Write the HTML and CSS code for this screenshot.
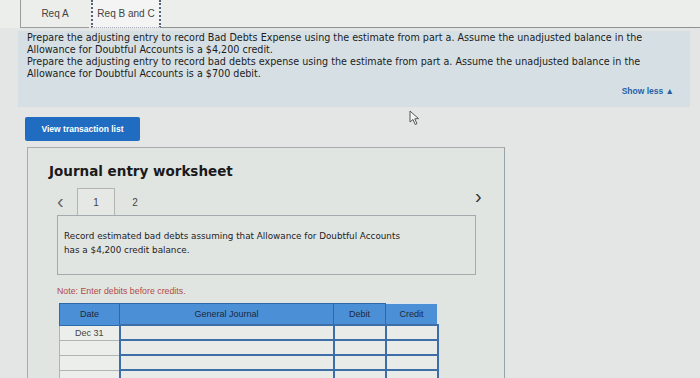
FILE: index.html
```html
<!DOCTYPE html>
<html>
<head>
<meta charset="utf-8"/>
<title>Req B and C</title>
<link rel="stylesheet" href="styles.css">
</head>
<body>
    <div id="tabs">
        <div class="tab">Req A</div>
        <div class="tab active">Req B and C</div>
        <div class="tab-rest"></div>
    </div>

    <div id="instructions">
        <p>Prepare the adjusting entry to record Bad Debts Expense using the estimate from part a. Assume the unadjusted balance in the Allowance for Doubtful Accounts is a $4,200 credit.</p>
        <p>Prepare the adjusting entry to record bad debts expense using the estimate from part a. Assume the unadjusted balance in the Allowance for Doubtful Accounts is a $700 debit.</p>
        <div class="show-less">Show less &#9650;</div>
    </div>

    <div id="actions">
        <button class="view-btn">View transaction list</button>
        <svg class="cursor" width="12" height="16" viewBox="0 0 12 16">
            <path d="M1 1 L1 12 L4 9.5 L6.2 14.5 L8 13.7 L5.8 8.8 L9.5 8.6 Z" fill="#f4f4f4" stroke="#555" stroke-width="1"/>
        </svg>
    </div>

    <div id="worksheet">
        <h2>Journal entry worksheet</h2>
        <div class="pager">
            <span class="arrow">&lsaquo;</span>
            <span class="page current">1</span>
            <span class="page">2</span>
            <span class="arrow next">&rsaquo;</span>
        </div>
        <div class="desc">Record estimated bad debts assuming that Allowance for Doubtful Accounts has a $4,200 credit balance.</div>
        <p class="note">Note: Enter debits before credits.</p>
        <table class="journal">
            <tr>
                <th class="c-date">Date</th>
                <th class="c-gj">General Journal</th>
                <th class="c-amt">Debit</th>
                <th class="c-amt credit">Credit</th>
            </tr>
            <tr><td class="date">Dec 31</td><td></td><td></td><td></td></tr>
            <tr><td class="date"></td><td></td><td></td><td></td></tr>
            <tr><td class="date"></td><td></td><td></td><td></td></tr>
            <tr><td class="date"></td><td></td><td></td><td></td></tr>
        </table>
    </div>
</body>
</html>
```

FILE: styles.css
```css
body {
    margin: 0;
    padding: 0;
    width: 700px;
    height: 378px;
    overflow: hidden;
    background: #e3e6e4;
    font-family: "DejaVu Sans", Verdana, sans-serif;
    color: #222;
}
#tabs {
    display: flex;
    height: 28px;
    padding-left: 20px;
    background: #eceeec;
}
.tab {
    width: 68px;
    display: flex;
    align-items: center;
    justify-content: center;
    font-family: "Liberation Sans", Arial, sans-serif;
    font-size: 10px;
    color: #444;
    border-left: 1px solid #9a9e9e;
    border-bottom: 1px solid #9a9e9e;
}
.tab.active {
    width: 66px;
    margin-left: 2px;
    background: #f3f4f3;
    border-left: 2px dotted #55627a;
    border-right: 2px dotted #55627a;
    border-bottom: 1px dotted #aab;
}
.tab-rest {
    flex: 1;
    border-bottom: 1px solid #8e9392;
}
#instructions {
    margin: 3px 10px 0 18px;
    padding: 1px 10px 10px 9px;
    background: #d6e0e4;
    font-size: 9.6px;
    line-height: 12px;
    color: #1c1c1c;
}
#instructions p {
    margin: 0;
}
.show-less {
    text-align: right;
    margin-top: 5px;
    padding-right: 6px;
    font-family: "Liberation Sans", Arial, sans-serif;
    font-weight: bold;
    font-size: 8.5px;
    color: #2462a8;
}
#actions {
    position: relative;
    height: 40px;
    padding: 10px 0 0 25px;
    box-sizing: border-box;
}
.view-btn {
    width: 115px;
    height: 24px;
    border: none;
    border-radius: 2px;
    background: #1f6cc1;
    color: #fff;
    font-family: "Liberation Sans", Arial, sans-serif;
    font-weight: bold;
    font-size: 8.5px;
}
.cursor {
    position: absolute;
    left: 409px;
    top: 3px;
}
#worksheet {
    margin-left: 27px;
    width: 478px;
    height: 240px;
    border: 1px solid #a7adae;
    border-right-color: #9aa2a6;
    background: #e1e5e2;
    box-sizing: border-box;
    padding: 15px 28px 0 29px;
}
#worksheet h2 {
    margin: 0 0 0 -8px;
    font-size: 13.5px;
    font-weight: bold;
    color: #1a1a1a;
}
.pager {
    display: flex;
    align-items: flex-end;
    height: 36px;
    position: relative;
    font-family: "Liberation Sans", Arial, sans-serif;
    font-size: 10px;
}
.pager .arrow {
    font-size: 20px;
    color: #666;
    width: 18px;
    margin-bottom: 7px;
    line-height: 14px;
}
.pager .next {
    position: absolute;
    right: -17px;
    top: 10px;
    color: #333;
}
.page {
    width: 36px;
    height: 26px;
    display: flex;
    align-items: center;
    justify-content: center;
    color: #444;
    margin-left: 2px;
}
.page.current {
    border: 1px solid #b1b4b3;
    border-bottom: none;
    background: #e6e8e5;
}
.desc {
    width: 419px;
    height: 60px;
    box-sizing: border-box;
    border: 1px solid #a4abae;
    padding: 13px 60px 0 6px;
    font-size: 8.8px;
    line-height: 14px;
    color: #222;
}
.note {
    margin: 11px 0 7px 0;
    font-family: "Liberation Sans", Arial, sans-serif;
    font-size: 8.8px;
    color: #b24a44;
}
.journal {
    margin-left: 2px;
    border-collapse: collapse;
    font-family: "Liberation Sans", Arial, sans-serif;
    font-size: 9px;
}
.journal th {
    height: 20px;
    padding: 0;
    background: #4b8fd6;
    border: 1px solid #2f6aa8;
    color: #1c2a3a;
    font-weight: normal;
}
.journal th.credit {
    border: 1px solid #d9e4ee;
}
.c-date { width: 59px; }
.c-gj { width: 213px; }
.c-amt { width: 51px; }
.journal td {
    height: 13px;
    padding: 0;
    border: 2px solid #3d6ea8;
    background: #e8ebe8;
}
.journal td.date {
    border: 1px solid #b0b4b4;
    text-align: center;
    color: #444;
    background: #eceeeb;
}
```
